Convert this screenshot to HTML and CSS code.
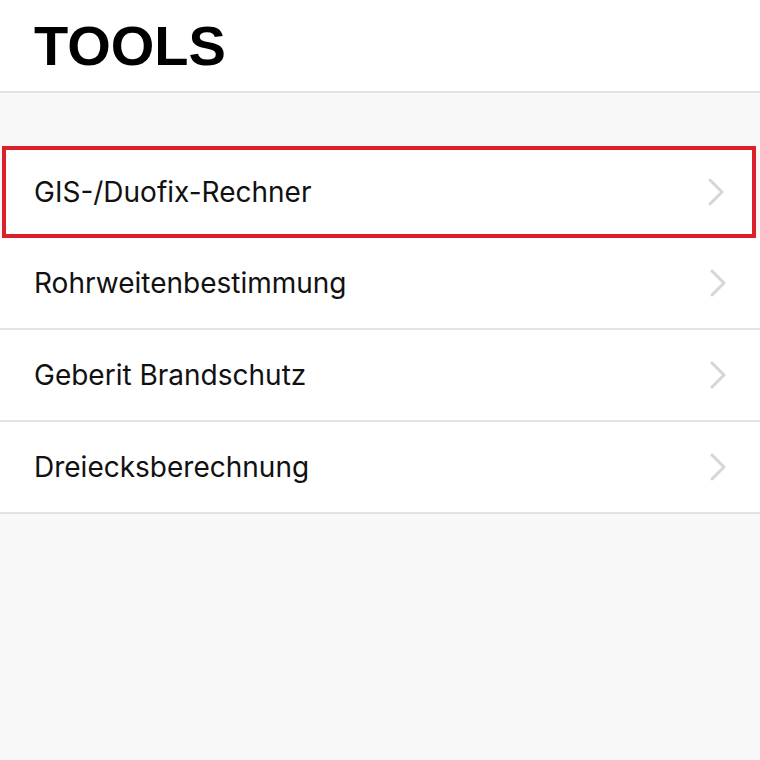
FILE: index.html
```html
<!DOCTYPE html>
<html lang="de">
<head>
  <meta charset="UTF-8">
  <meta name="viewport" content="width=device-width, initial-scale=1.0">
  <title>Tools</title>
  <link rel="stylesheet" href="styles.css">
</head>
<body>
  <header class="page-header">
    <h1>TOOLS</h1>
  </header>
  <div class="spacer"></div>
  <ul class="tool-list">
    <li class="tool-item tool-item-active">
      <span>GIS-/Duofix-Rechner</span>
      <svg class="chevron" viewBox="0 0 16 28"><path d="M2 2 L14 14 L2 26"/></svg>
    </li>
    <li class="tool-item">
      <span>Rohrweitenbestimmung</span>
      <svg class="chevron" viewBox="0 0 16 28"><path d="M2 2 L14 14 L2 26"/></svg>
    </li>
    <li class="tool-item">
      <span>Geberit Brandschutz</span>
      <svg class="chevron" viewBox="0 0 16 28"><path d="M2 2 L14 14 L2 26"/></svg>
    </li>
    <li class="tool-item">
      <span>Dreiecksberechnung</span>
      <svg class="chevron" viewBox="0 0 16 28"><path d="M2 2 L14 14 L2 26"/></svg>
    </li>
  </ul>
</body>
</html>
```

FILE: styles.css
```css
body {
  margin: 0;
  background-color: #f8f8f8;
  font-family: 'Inter', 'Roboto', sans-serif;
  color: #111;
}
.page-header {
  height: 93px;
  background-color: #fff;
  border-bottom: 2px solid #e2e2e2;
  display: flex;
  align-items: center;
  padding-left: 34px;
  box-sizing: border-box;
}
.page-header h1 {
  margin: 0;
  font-family: 'Liberation Sans', Arial, sans-serif;
  font-size: 56px;
  font-weight: bold;
  color: #000;
}
.spacer {
  height: 53px;
}
.tool-list {
  list-style: none;
  margin: 0;
  padding: 0;
}
.tool-item {
  height: 92px;
  box-sizing: border-box;
  background-color: #fff;
  border-bottom: 2px solid #e3e3e3;
  display: flex;
  align-items: center;
  justify-content: space-between;
  padding: 0 34px 0 34px;
  font-size: 28px;
}
.tool-item-active {
  margin: 0 4px 0 2px;
  border: 4px solid #dc1f2b;
  padding: 0 28px 0 28px;
}
.chevron {
  width: 16px;
  height: 28px;
  fill: none;
  stroke: #d6d6d6;
  stroke-width: 3;
  stroke-linecap: round;
  stroke-linejoin: round;
}
```
